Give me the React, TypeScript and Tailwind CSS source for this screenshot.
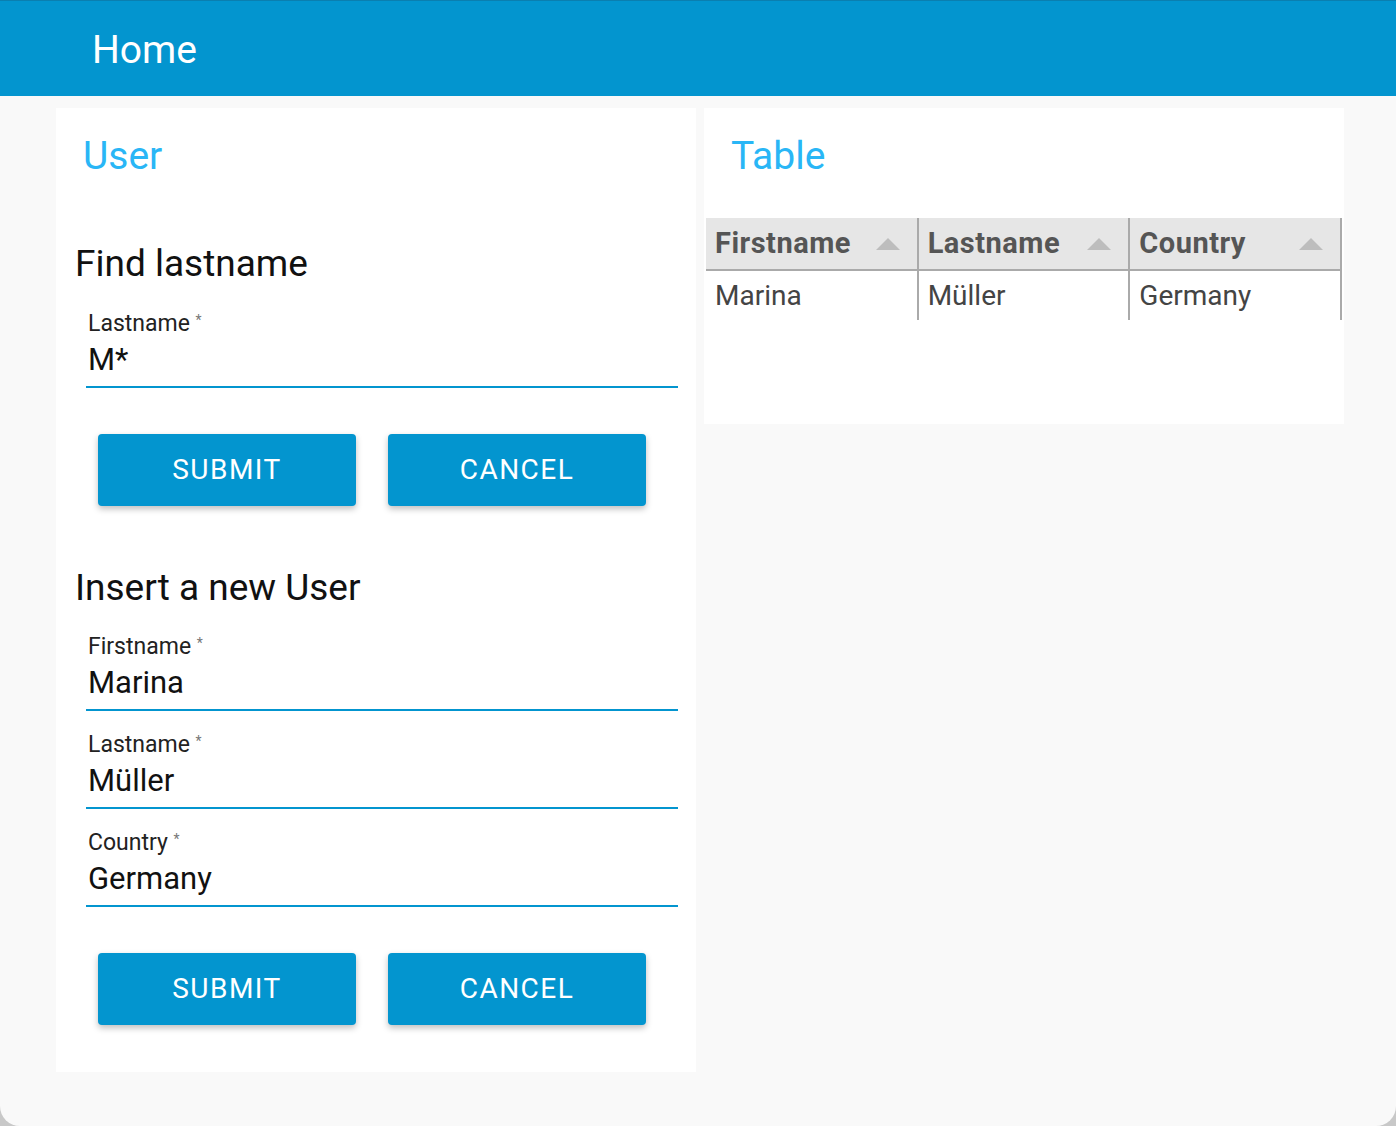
import { useState } from 'react'

const font = { fontFamily: 'Roboto, "Noto Sans", sans-serif' }

function Field({ label, value }: { label: string; value: string }) {
  const [v, setV] = useState(value)
  return (
    <div className="ml-[30px] mr-[18px] flex flex-col">
      <label className="pl-[2px] text-[23px] leading-[28px] text-[#222]">
        {label} <span className="relative -top-[6px] text-[14px] text-[#777]">*</span>
      </label>
      <input
        value={v}
        onChange={(e) => setV(e.target.value)}
        className="h-[48px] border-b-2 border-[#0395cf] bg-transparent pb-[7px] pl-[2px] text-[31px] text-[#111] outline-none"
      />
    </div>
  )
}

function Buttons() {
  return (
    <div className="ml-[42px] flex gap-[32px]">
      <button className="h-[72px] w-[258px] rounded-[4px] bg-[#0395cf] text-[28px] tracking-[1.5px] text-white shadow-[0_3px_6px_rgba(0,0,0,0.25)]">
        SUBMIT
      </button>
      <button className="h-[72px] w-[258px] rounded-[4px] bg-[#0395cf] text-[28px] tracking-[1.5px] text-white shadow-[0_3px_6px_rgba(0,0,0,0.25)]">
        CANCEL
      </button>
    </div>
  )
}

function SortArrow() {
  return (
    <svg width="24" height="12" viewBox="0 0 24 12" className="shrink-0">
      <polygon points="12,0 24,12 0,12" fill="#bdbdbd" />
    </svg>
  )
}

export default function App() {
  const cols = ['Firstname', 'Lastname', 'Country']
  const row = ['Marina', 'Müller', 'Germany']
  return (
    <div className="bg-[#c8c8c8]" style={font}>
      <div className="flex h-[1126px] flex-col overflow-hidden rounded-b-[20px] bg-[#f9f9f9]">
        <header className="flex h-[96px] shrink-0 items-center border-t border-[#0a7fb0] bg-[#0395cf] pl-[92px] pt-[4px] text-[39px] text-white">
          Home
        </header>

        <div className="flex items-start gap-[8px] pl-[56px] pt-[12px]">
          <section className="flex h-[964px] w-[640px] flex-col bg-white">
            <h1 className="ml-[27px] mt-[26px] text-[39px] leading-[44px] text-[#29b6f6]">User</h1>

            <h2 className="ml-[19px] mt-[64px] text-[37px] leading-[44px] text-[#111]">Find lastname</h2>
            <div className="mt-[24px]">
              <Field label="Lastname" value="M*" />
            </div>
            <div className="mt-[46px]">
              <Buttons />
            </div>

            <h2 className="ml-[19px] mt-[60px] text-[37px] leading-[44px] text-[#111]">Insert a new User</h2>
            <div className="mt-[23px] flex flex-col gap-[20px]">
              <Field label="Firstname" value="Marina" />
              <Field label="Lastname" value="Müller" />
              <Field label="Country" value="Germany" />
            </div>
            <div className="mt-[46px]">
              <Buttons />
            </div>
          </section>

          <section className="h-[316px] w-[640px] bg-white">
            <h1 className="ml-[27px] mt-[26px] text-[39px] leading-[44px] text-[#29b6f6]">Table</h1>
            <table className="ml-[2px] mt-[40px] w-[636px] table-fixed border-collapse">
              <thead>
                <tr className="h-[52px] bg-[#e6e6e6]">
                  {cols.map((c) => (
                    <th
                      key={c}
                      className="border-b-2 border-r-2 border-[#aaa] px-[9px] text-left text-[29px] font-bold tracking-[0.5px] text-[#555]"
                    >
                      <div className="flex items-center justify-between pr-[8px]">
                        <span>{c}</span>
                        <SortArrow />
                      </div>
                    </th>
                  ))}
                </tr>
              </thead>
              <tbody>
                <tr className="h-[50px]">
                  {row.map((c) => (
                    <td key={c} className="border-r-2 border-[#aaa] px-[9px] text-[28px] text-[#444]">
                      {c}
                    </td>
                  ))}
                </tr>
              </tbody>
            </table>
          </section>
        </div>
      </div>
    </div>
  )
}
